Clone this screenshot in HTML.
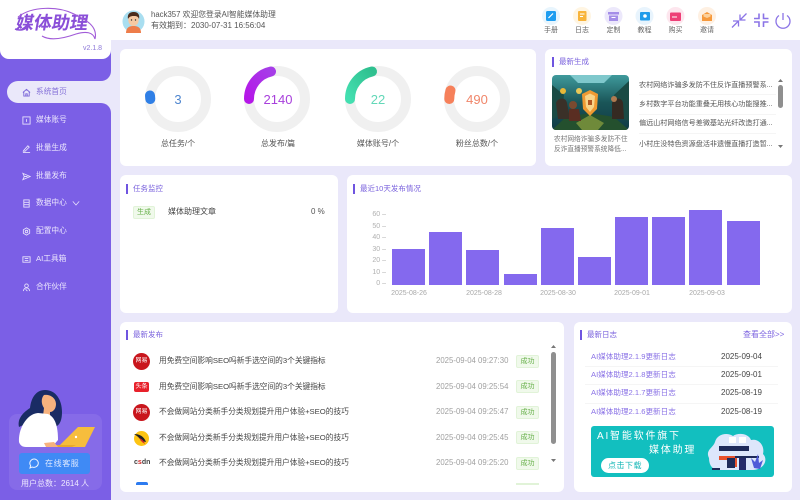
<!DOCTYPE html>
<html lang="zh"><head><meta charset="utf-8"><title>媒体助理</title>
<style>
*{box-sizing:border-box;margin:0;padding:0}
html,body{width:800px;height:500px;overflow:hidden;background:#eae8fa;font-family:"Liberation Sans","Noto Sans CJK SC",sans-serif;color:#444}
.a{position:absolute;white-space:nowrap}
.card{position:absolute;background:#fff;border-radius:6px}
.ttl{position:absolute;font-size:7.5px;line-height:10px;color:#7a62dd;white-space:nowrap;padding-left:7px}
.ttl:before{content:"";position:absolute;left:0;top:-0.5px;width:2px;height:10px;background:#6f55e0}
.m{position:absolute;left:22px;font-size:7.7px;line-height:12px;color:#ece7fd;white-space:nowrap;display:flex;align-items:center}
.m svg{width:9px;height:9px;margin-right:5px;fill:none;stroke:#e6e0fb;stroke-width:1}
.t{position:absolute;font-size:7px;color:#666;text-align:center;width:30px;line-height:9px}
.lab{position:absolute;font-size:8px;color:#555;text-align:center;width:80px;line-height:10px}
.num{position:absolute;font-size:13px;text-align:center;width:60px;line-height:16px}
.row{position:absolute;left:159px;font-size:7.7px;line-height:10px;color:#444;white-space:nowrap}
.time{position:absolute;left:436px;font-size:7.8px;line-height:10px;color:#a0a0a0;white-space:nowrap}
.ok{position:absolute;left:516px;width:23px;height:13px;font-size:7px;line-height:11px;text-align:center;color:#67b04a;background:#f0f9eb;border:1px solid #e1f3d8;border-radius:2px}
.ico{position:absolute;left:133px;width:17px;height:17px;border-radius:50%;background:#c9161d;color:#fff;font-size:6px;line-height:17px;text-align:center}
.lg{position:absolute;left:591px;font-size:7.6px;line-height:10px;color:#8a72e6;white-space:nowrap}
.ld{position:absolute;left:721px;font-size:8px;line-height:10px;color:#444;white-space:nowrap}
.hr{position:absolute;height:1px;background:#f5f5f5}
.yl{position:absolute;left:368px;width:18px;text-align:right;font-size:7px;line-height:8px;color:#b0b0b0}
.xl{position:absolute;top:289px;font-size:7px;line-height:9px;color:#a8a8a8;width:50px;text-align:center}
.bar{position:absolute;width:33px;background:#8469ee}
.gen{position:absolute;left:639px;font-size:7.1px;line-height:10px;color:#555;white-space:nowrap}
</style></head><body>

<!-- sidebar -->
<div class="a" style="left:0;top:0;width:111px;height:500px;background:#7b5fe6"></div>
<div class="a" style="left:0;top:0;width:111px;height:59px;background:#fff;border-radius:0 0 9px 9px"></div>
<div class="a" style="left:111px;top:40px;width:689px;height:460px;background:#eae8fa"></div>
<div class="a" style="left:111px;top:0;width:689px;height:40px;background:#fff"></div>

<!-- logo -->
<div class="a" style="left:16px;top:10px;font-size:18px;line-height:26px;font-weight:700;color:#8a4fd8;transform:skewX(-10deg);letter-spacing:0">媒体助理</div>
<svg class="a" style="left:0;top:0" width="111" height="59" viewBox="0 0 111 59" fill="none">
<path d="M18 17C32 6 58 6 74 14C86 20 98 26 95 39C93 32 86 31 76 34C62 39 50 41 42 36" stroke="#a15bd8" stroke-width="1.100"/>
<path d="M15 29C20 31 24 30 28 27" stroke="#8a4fd8" stroke-width="1.500"/>
</svg>
<div class="a" style="left:83px;top:44px;font-size:7px;line-height:10px;color:#8d78d8">v2.1.8</div>

<!-- menu -->
<div class="a" style="left:7px;top:81px;width:104px;height:22px;background:#eae8fa;border-radius:11px 0 0 11px"></div>
<div class="a" style="left:99px;top:69px;width:12px;height:12px;background:#eae8fa"></div>
<div class="a" style="left:99px;top:69px;width:12px;height:12px;background:#7b5fe6;border-radius:0 0 10px 0"></div>
<div class="a" style="left:99px;top:103px;width:12px;height:12px;background:#eae8fa"></div>
<div class="a" style="left:99px;top:103px;width:12px;height:12px;background:#7b5fe6;border-radius:0 10px 0 0"></div>
<div class="m" style="top:86px;color:#8470d8"><svg viewBox="0 0 10 10" style="stroke:#7b66d8"><path d="M1 5L5 1.5L9 5M2 4.5V9H8V4.5M4.2 9V6.5H5.8V9"/></svg>系统首页</div>
<div class="m" style="top:114px"><svg viewBox="0 0 10 10"><rect x="1" y="1" width="8" height="8"/><path d="M5 3.5V6.5"/></svg>媒体账号</div>
<div class="m" style="top:142px"><svg viewBox="0 0 10 10"><path d="M2 7L6.500 2L8 3.500L3.500 8H1.500ZM1 9.500H9"/></svg>批量生成</div>
<div class="m" style="top:170px"><svg viewBox="0 0 10 10"><path d="M1 1.500L9 5L1 8.500L2.500 5ZM2.500 5H6"/></svg>批量发布</div>
<div class="m" style="top:197px"><svg viewBox="0 0 10 10"><rect x="2" y="1" width="6" height="8"/><path d="M2 3.700H8M2 6.300H8"/></svg>数据中心<svg viewBox="0 0 10 10" style="margin:0 0 0 5px;width:8px;height:8px"><path d="M1 3L5 7.500L9 3"/></svg></div>
<div class="m" style="top:225px"><svg viewBox="0 0 10 10"><path d="M5 1L8.500 3V7L5 9L1.500 7V3Z"/><circle cx="5" cy="5" r="1.400"/></svg>配置中心</div>
<div class="m" style="top:253px"><svg viewBox="0 0 10 10"><rect x="1" y="2" width="8" height="6"/><path d="M3 4H7M3 6H7"/></svg>AI工具箱</div>
<div class="m" style="top:281px"><svg viewBox="0 0 10 10"><circle cx="5" cy="3" r="2"/><path d="M1.500 9C2 6 4 5.500 5 5.500C6 5.500 8 6 8.500 9M4 7L6 9"/></svg>合作伙伴</div>

<!-- service box -->
<div class="a" style="left:9px;top:414px;width:93px;height:76px;background:#8a6fe8;border-radius:8px;opacity:.75"></div>
<svg class="a" style="left:0;top:370px" width="111" height="90" viewBox="0 370 111 90">
<path d="M19 427C17 418 24 412 30 408C31 398 36 390 45 390C56 390 62 400 62 412C62 420 60 424 57 426L30 422Z" fill="#1a2c64"/>
<path d="M44 395C50 394 56 398 56 404C56 409 53 412 50 412L50 417L43 416L44 408C41 404 41 398 44 395Z" fill="#f6b27e"/>
<path d="M19 442C18 430 26 414 38 413L48 414C55 417 58 426 58 440L52 447H26C22 447 20 445 19 442Z" fill="#fff"/>
<path d="M58 447L78 427H95L85 447Z" fill="#f6bd3d"/>
<path d="M53 445H76L72 447H53Z" fill="#e9a92a"/>
<circle cx="76" cy="437" r="1.200" fill="#fff"/>
<path d="M44 443L54 442L58 447H46Z" fill="#f6b27e"/>
</svg>
<div class="a" style="left:19px;top:453px;width:71px;height:21px;background:#3f8af5;border-radius:3px;color:#dfeaff;font-size:8px;line-height:21px;padding-left:26px;letter-spacing:.6px">在线客服</div>
<svg class="a" style="left:29px;top:458px" width="11" height="11" viewBox="0 0 11 11" fill="none" stroke="#eef4ff" stroke-width="1"><path d="M5.500 1A4.500 4.200 0 1 1 3 9L1 10L1.600 7.500A4.500 4.200 0 0 1 5.500 1Z"/></svg>
<div class="a" style="left:21px;top:479px;font-size:8px;line-height:10px;color:#eee9ff">用户总数：2614 人</div>

<!-- header -->
<svg class="a" style="left:122px;top:10px" width="23" height="23" viewBox="0 0 23 23">
<circle cx="11.500" cy="11.500" r="11" fill="#a9def0"/>
<path d="M4 23C4 17 8 16 11.500 16C15 16 19 17 19 23Z" fill="#ee7d4a"/>
<ellipse cx="11.500" cy="10" rx="5.200" ry="6" fill="#f6c9a2"/>
<path d="M6 9C5 3 9 2 12 2C16 2 18 5 17 9C16 6 14 6 11 6C9 6 7 7 6 9Z" fill="#4b2c1c"/>
<circle cx="9.500" cy="10" r=".7" fill="#333"/><circle cx="13.500" cy="10" r=".7" fill="#333"/>
</svg>
<div class="a" style="left:151px;top:10px;font-size:7.800px;line-height:10px;color:#555">hack357 欢迎您登录AI智能媒体助理</div>
<div class="a" style="left:151px;top:21px;font-size:8px;line-height:10px;color:#555">有效期到：2030-07-31 16:56:04</div>

<!-- toolbar icons -->
<svg class="a" style="left:540px;top:6px" width="190" height="22" viewBox="0 0 190 22">
<circle cx="11" cy="10" r="9" fill="#e8f5fd"/><rect x="6" y="5" width="10" height="10" rx="1.500" fill="#1e9df0"/><path d="M8.500 12L13 7.500" stroke="#fff" stroke-width="1.200"/>
<circle cx="42" cy="10" r="9" fill="#fff5e2"/><rect x="38" y="5" width="8.500" height="10" rx="1" fill="#f8b43a"/><path d="M40 8H44.500M40 10.500H43" stroke="#fff" stroke-width="1"/>
<circle cx="73.500" cy="10" r="9" fill="#ece8fb"/><path d="M68 6H79V8.500H68ZM69 9.500H78V15H69Z" fill="#a48ee8"/><path d="M71.500 11.500H75.500" stroke="#fff" stroke-width="1"/>
<circle cx="104.500" cy="10" r="9" fill="#e8f4fd"/><rect x="100" y="6" width="10" height="8.500" rx="1" fill="#1f9bea"/><circle cx="105" cy="10" r="1.800" fill="#fff"/>
<circle cx="135.500" cy="10" r="9" fill="#fde6ee"/><rect x="130" y="6.500" width="11" height="8.500" rx="1" fill="#ee3f77"/><path d="M132 11H137" stroke="#fff" stroke-width="1"/>
<circle cx="167" cy="10" r="9" fill="#fef0e2"/><path d="M162 9L167 6L172 9V15H162Z" fill="#f6993c"/><path d="M163.500 8H170.500V10.500L167 12L163.500 10.500Z" fill="#fcd09a"/>
</svg>
<div class="t" style="left:536px;top:26px">手册</div>
<div class="t" style="left:567px;top:26px">日志</div>
<div class="t" style="left:598.500px;top:26px">定制</div>
<div class="t" style="left:629.500px;top:26px">教程</div>
<div class="t" style="left:660.500px;top:26px">购买</div>
<div class="t" style="left:692px;top:26px">邀请</div>

<svg class="a" style="left:730px;top:11px" width="64" height="18" viewBox="0 0 64 18" fill="none" stroke="#8b74e6" stroke-width="1.300">
<path d="M2 16.500L8.500 10M3 10H8.500V15.500M16.500 2.500L10 9M10 3.500V9H15.500"/>
<path d="M29 2.500V7.500H24M33.500 2.500V7.500H38.500M29 16V11H24M33.500 16V11H38.500" stroke-width="1.600"/>
<path d="M53 2V9"/><path d="M49 4.500A7 7 0 1 0 57 4.500"/>
</svg>

<!-- cards -->
<div class="card" style="left:120px;top:49px;width:416px;height:117px"></div>
<div class="card" style="left:545px;top:49px;width:247px;height:117px"></div>
<div class="card" style="left:120px;top:175px;width:218px;height:138px"></div>
<div class="card" style="left:347px;top:175px;width:445px;height:138px"></div>
<div class="card" style="left:120px;top:322px;width:444px;height:170px"></div>
<div class="card" style="left:574px;top:322px;width:218px;height:170px"></div>

<!-- gauges -->
<svg class="a" style="left:120px;top:49px" width="416" height="117" viewBox="0 0 416 117" fill="none">
<defs>
<linearGradient id="g1" x1="0" y1="1" x2="1" y2="0"><stop offset="0" stop-color="#b517e8"/><stop offset="1" stop-color="#a63de8"/></linearGradient>
<linearGradient id="g2" x1="0" y1="1" x2="1" y2="0"><stop offset="0" stop-color="#43dfb0"/><stop offset="1" stop-color="#2fc08f"/></linearGradient>
</defs>
<g stroke="#f0f0f0" stroke-width="10"><circle cx="58" cy="50" r="28"/><circle cx="157" cy="50" r="28"/><circle cx="258" cy="50" r="28"/><circle cx="357" cy="50" r="28"/></g>
<path d="M30 46.500L30.300 50" stroke="#2f7fe6" stroke-width="10" stroke-linecap="round"/>
<path d="M129 50A28 28 0 0 1 151 22.500" stroke="url(#g1)" stroke-width="10" stroke-linecap="round"/>
<path d="M230 50A28 28 0 0 1 252 22.500" stroke="url(#g2)" stroke-width="10" stroke-linecap="round"/>
<path d="M330.500 41.500A28 28 0 0 0 329.300 50" stroke="#f6805a" stroke-width="10" stroke-linecap="round"/>
</svg>
<div class="num" style="left:148px;top:92px;color:#4f86cf">3</div>
<div class="num" style="left:248px;top:92px;color:#a840dc">2140</div>
<div class="num" style="left:348px;top:92px;color:#63d8b8">22</div>
<div class="num" style="left:447px;top:92px;color:#f0866a">490</div>
<div class="lab" style="left:138px;top:139px">总任务/个</div>
<div class="lab" style="left:238px;top:139px">总发布/篇</div>
<div class="lab" style="left:338px;top:139px">媒体账号/个</div>
<div class="lab" style="left:437px;top:139px">粉丝总数/个</div>

<!-- latest generated -->
<div class="ttl" style="left:552px;top:57px">最新生成</div>
<svg class="a" style="left:552px;top:75px" width="77" height="55" viewBox="0 0 77 55">
<defs><clipPath id="c"><rect width="77" height="55" rx="4"/></clipPath>
<linearGradient id="sk" x1="0" y1="0" x2="0" y2="1"><stop offset="0" stop-color="#3f9a9c"/><stop offset=".5" stop-color="#1a5558"/><stop offset="1" stop-color="#103a44"/></linearGradient></defs>
<g clip-path="url(#c)">
<rect width="77" height="55" fill="url(#sk)"/>
<path d="M18 0H60L52 8H26Z" fill="#7fc8cc"/>
<path d="M0 10L12 20L10 40L0 44ZM77 6L62 20L64 42L77 46Z" fill="#1a4a44"/>
<path d="M0 55L14 42L38 38L62 42L77 55Z" fill="#24502e"/>
<path d="M24 48L38 40L52 48L46 55H30Z" fill="#6f8a3a"/>
<path d="M30 19L38 15L46 19L45 34L38 41L31 34Z" fill="#ef9a32"/>
<path d="M33 21L38 18.500L43 21L42 32L38 37L34 32Z" fill="#f8d488"/>
<rect x="36" y="25" width="4" height="5" fill="#b4561e"/>
<circle cx="11" cy="16" r="3" fill="#e8b838"/><circle cx="27" cy="16" r="3" fill="#e8c858"/>
<path d="M4 28C6 22 14 22 15 28L18 44H6Z" fill="#3a3028"/><path d="M60 28C62 22 70 22 71 28L72 44H60Z" fill="#352a22"/>
<circle cx="21" cy="30" r="4" fill="#7a4a30"/><path d="M17 34H27L29 46H17Z" fill="#5a2e22"/>
<circle cx="62" cy="24" r="3" fill="#b07a50"/>
</g></svg>
<div class="a" style="left:554px;top:135px;font-size:6.700px;line-height:10px;color:#777">农村网络诈骗多发防不住<br>反诈直播预警系统降低...</div>
<div class="gen" style="top:80px">农村网络诈骗多发防不住反诈直播预警系...</div>
<div class="gen" style="top:99px">乡村数字平台功能重叠无用核心功能搜推...</div>
<div class="gen" style="top:118px">偏远山村网络信号差微基站光纤改造打通...</div>
<div class="gen" style="top:139px">小村庄没特色资源盘活非遗慢直播打造暂...</div>
<div class="hr" style="left:639px;top:94px;width:137px"></div>
<div class="hr" style="left:639px;top:114px;width:137px"></div>
<div class="hr" style="left:639px;top:133px;width:137px"></div>
<div class="a" style="left:778px;top:85px;width:5px;height:23px;background:#8f8f8f;border-radius:3px"></div>
<svg class="a" style="left:778px;top:78px" width="5" height="70" viewBox="0 0 5 70" fill="#777"><path d="M2.500 1L5 4H0ZM0 67H5L2.500 70Z"/></svg>

<!-- task monitor -->
<div class="ttl" style="left:126px;top:184px">任务监控</div>
<div class="a" style="left:133px;top:206px;width:22px;height:13px;background:#f0f9eb;border:1px solid #e1f3d8;border-radius:2px;font-size:7px;line-height:11px;text-align:center;color:#67b04a">生成</div>
<div class="a" style="left:168px;top:207px;font-size:8px;line-height:10px;color:#444">媒体助理文章</div>
<div class="a" style="left:311px;top:207px;font-size:8px;line-height:10px;color:#555">0 %</div>

<!-- chart -->
<div class="ttl" style="left:353px;top:184px">最近10天发布情况</div>
<div class="yl" style="top:211px">60 –</div><div class="yl" style="top:223px">50 –</div><div class="yl" style="top:234px">40 –</div><div class="yl" style="top:246px">30 –</div><div class="yl" style="top:257px">20 –</div><div class="yl" style="top:269px">10 –</div><div class="yl" style="top:280px">0 –</div>
<div class="bar" style="left:392px;top:249px;height:36px"></div>
<div class="bar" style="left:429px;top:232px;height:53px"></div>
<div class="bar" style="left:466px;top:250px;height:35px"></div>
<div class="bar" style="left:504px;top:274px;height:11px"></div>
<div class="bar" style="left:541px;top:228px;height:57px"></div>
<div class="bar" style="left:578px;top:257px;height:28px"></div>
<div class="bar" style="left:615px;top:217px;height:68px"></div>
<div class="bar" style="left:652px;top:217px;height:68px"></div>
<div class="bar" style="left:689px;top:210px;height:75px"></div>
<div class="bar" style="left:727px;top:221px;height:64px"></div>
<div class="xl" style="left:384px">2025-08-26</div>
<div class="xl" style="left:459px">2025-08-28</div>
<div class="xl" style="left:533px">2025-08-30</div>
<div class="xl" style="left:607px">2025-09-01</div>
<div class="xl" style="left:682px">2025-09-03</div>

<!-- latest publish -->
<div class="ttl" style="left:126px;top:330px">最新发布</div>
<div class="ico" style="top:353px">网易</div>
<div class="a" style="left:134px;top:382px;width:15px;height:10px;border-radius:2px;background:#e8212b;color:#fff;font-size:6px;line-height:10px;text-align:center">头条</div>
<div class="ico" style="top:404px">网易</div>
<svg class="a" style="left:133px;top:430px" width="17" height="17" viewBox="0 0 17 17"><circle cx="8.500" cy="8.500" r="7.500" fill="#fdc413"/><path d="M1 4C6 4 11 6 13 12L8 11C7 8 4 6 1 4Z" fill="#222"/><path d="M6 8C9 9 11 11 12 14L9 12Z" fill="#d92c2c"/></svg>
<div class="a" style="left:134px;top:458px;font-size:7px;line-height:10px;font-weight:700;color:#444">c<span style="color:#c22">s</span>dn</div>
<div class="a" style="left:136px;top:482px;width:12px;height:3px;border-radius:2px 2px 0 0;background:#2d7bf0"></div>
<div class="row" style="top:356px">用免费空间影响SEO吗新手选空间的3个关键指标</div>
<div class="row" style="top:382px">用免费空间影响SEO吗新手选空间的3个关键指标</div>
<div class="row" style="top:407px">不会做网站分类新手分类规划提升用户体验+SEO的技巧</div>
<div class="row" style="top:433px">不会做网站分类新手分类规划提升用户体验+SEO的技巧</div>
<div class="row" style="top:458px">不会做网站分类新手分类规划提升用户体验+SEO的技巧</div>
<div class="time" style="top:356px">2025-09-04 09:27:30</div>
<div class="time" style="top:382px">2025-09-04 09:25:54</div>
<div class="time" style="top:407px">2025-09-04 09:25:47</div>
<div class="time" style="top:433px">2025-09-04 09:25:45</div>
<div class="time" style="top:458px">2025-09-04 09:25:20</div>
<div class="ok" style="top:355px">成功</div>
<div class="ok" style="top:380px">成功</div>
<div class="ok" style="top:406px">成功</div>
<div class="ok" style="top:431px">成功</div>
<div class="ok" style="top:457px">成功</div>
<div class="a" style="left:516px;top:483px;width:23px;height:2px;background:#e1f3d8"></div>
<div class="a" style="left:551px;top:352px;width:5px;height:92px;background:#8f8f8f;border-radius:3px"></div>
<svg class="a" style="left:551px;top:345px" width="5" height="117" viewBox="0 0 5 117" fill="#777"><path d="M2.500 0L5 3H0ZM0 114H5L2.500 117Z"/></svg>

<!-- logs -->
<div class="ttl" style="left:580px;top:330px">最新日志</div>
<div class="a" style="left:743px;top:330px;font-size:8px;line-height:10px;color:#7e66e0">查看全部&gt;&gt;</div>
<div class="lg" style="top:352px">AI媒体助理2.1.9更新日志</div><div class="ld" style="top:352px">2025-09-04</div>
<div class="lg" style="top:370px">AI媒体助理2.1.8更新日志</div><div class="ld" style="top:370px">2025-09-01</div>
<div class="lg" style="top:388px">AI媒体助理2.1.7更新日志</div><div class="ld" style="top:388px">2025-08-19</div>
<div class="lg" style="top:407px">AI媒体助理2.1.6更新日志</div><div class="ld" style="top:407px">2025-08-19</div>
<div class="hr" style="left:585px;top:366px;width:193px"></div>
<div class="hr" style="left:585px;top:384px;width:193px"></div>
<div class="hr" style="left:585px;top:403px;width:193px"></div>

<!-- banner -->
<div class="a" style="left:591px;top:426px;width:183px;height:51px;background:#12bfbf;border-radius:3px"></div>
<div class="a" style="left:597px;top:430px;font-size:10px;line-height:14px;color:#fff;letter-spacing:1.800px">AI智能软件旗下</div>
<div class="a" style="left:649px;top:444px;font-size:10px;line-height:14px;color:#fff;letter-spacing:1.800px">媒体助理</div>
<div class="a" style="left:601px;top:458px;width:48px;height:15px;border-radius:8px;background:#fff;color:#18b8b8;font-size:8px;line-height:15px;text-align:center;letter-spacing:.5px">点击下载</div>
<svg class="a" style="left:705px;top:432px" width="64" height="42" viewBox="0 0 64 42">
<path d="M4 26C0 18 8 16 10 10C12 2 22 0 28 4C34 0 44 2 46 8C54 6 60 14 58 22C64 28 58 38 48 38H14C8 38 4 34 4 26Z" fill="#dde6fb"/>
<rect x="14" y="14" width="30" height="5" fill="#1e2a5a"/>
<rect x="24" y="5" width="7" height="6" fill="#fff"/><rect x="34" y="5" width="7" height="6" fill="#fff"/>
<path d="M14 24H32V35H24V28H14Z" fill="#e8502c"/>
<rect x="22" y="26" width="8" height="10" fill="#1e2a5a"/>
<rect x="30" y="24" width="24" height="2" fill="#1e2a5a"/>
<rect x="34" y="26" width="7" height="12" fill="#252a6a"/>
<path d="M49 36L46 26L50 30L53 22L54 31L58 28L55 37Z" fill="#4f5bd8"/>
<rect x="7" y="36" width="8" height="2" fill="#1e2a5a"/>
</svg>
</body></html>
